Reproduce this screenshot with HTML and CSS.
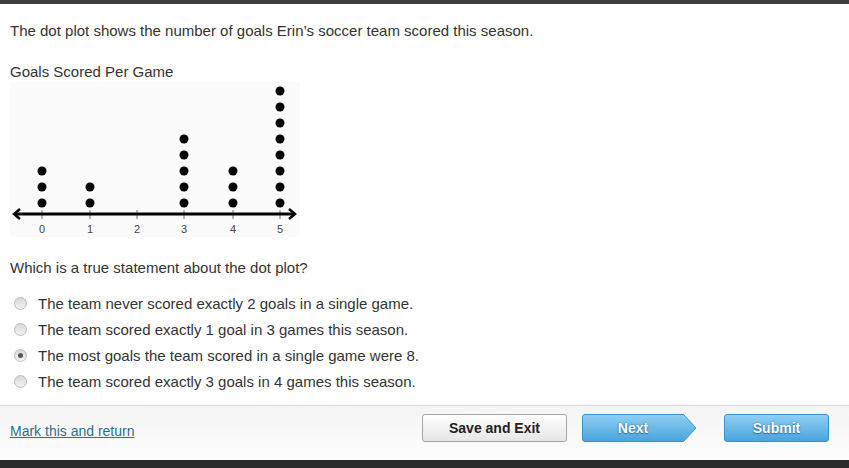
FILE: index.html
```html
<!DOCTYPE html>
<html>
<head>
<meta charset="utf-8">
<link rel="stylesheet" href="styles.css">
</head>
<body>
<div class="topbar"></div>
<main class="content">
  <p class="prompt">The dot plot shows the number of goals Erin’s soccer team scored this season.</p>
  <p class="title">Goals Scored Per Game</p>
  <svg class="plot" width="290" height="155" viewBox="0 0 290 155">
    <rect x="0" y="0" width="290" height="155" fill="#fbfbfb"/>
    <g fill="#000">
      <circle cx="32" cy="121" r="4.5"/><circle cx="32" cy="105" r="4.5"/><circle cx="32" cy="89" r="4.5"/>
      <circle cx="80" cy="121" r="4.5"/><circle cx="80" cy="105" r="4.5"/>
      <circle cx="174" cy="121" r="4.5"/><circle cx="174" cy="105" r="4.5"/><circle cx="174" cy="89" r="4.5"/><circle cx="174" cy="73" r="4.5"/><circle cx="174" cy="57" r="4.5"/>
      <circle cx="223" cy="121" r="4.5"/><circle cx="223" cy="105" r="4.5"/><circle cx="223" cy="89" r="4.5"/>
      <circle cx="270" cy="121" r="4.5"/><circle cx="270" cy="105" r="4.5"/><circle cx="270" cy="89" r="4.5"/><circle cx="270" cy="73" r="4.5"/><circle cx="270" cy="57" r="4.5"/><circle cx="270" cy="41" r="4.5"/><circle cx="270" cy="25" r="4.5"/><circle cx="270" cy="9" r="4.5"/>
    </g>
    <g stroke="#777" stroke-width="1">
      <line x1="32" y1="128" x2="32" y2="137"/>
      <line x1="80" y1="128" x2="80" y2="137"/>
      <line x1="127" y1="128" x2="127" y2="137"/>
      <line x1="174" y1="128" x2="174" y2="137"/>
      <line x1="223" y1="128" x2="223" y2="137"/>
      <line x1="270" y1="128" x2="270" y2="137"/>
    </g>
    <line x1="5" y1="132" x2="284" y2="132" stroke="#000" stroke-width="3"/>
    <polyline points="10,127 4,132 10,137" fill="none" stroke="#000" stroke-width="2.5"/>
    <polyline points="279,127 285,132 279,137" fill="none" stroke="#000" stroke-width="2.5"/>
    <g class="ticklabel" font-size="11" fill="#444" text-anchor="middle">
      <text x="32" y="151">0</text>
      <text x="80" y="151">1</text>
      <text x="127" y="151">2</text>
      <text x="174" y="151">3</text>
      <text x="223" y="151">4</text>
      <text x="270" y="151">5</text>
    </g>
  </svg>
  <p class="question">Which is a true statement about the dot plot?</p>
  <ul class="options">
    <li class="option"><span class="radio"></span>The team never scored exactly 2 goals in a single game.</li>
    <li class="option"><span class="radio"></span>The team scored exactly 1 goal in 3 games this season.</li>
    <li class="option"><span class="radio checked"></span>The most goals the team scored in a single game were 8.</li>
    <li class="option"><span class="radio"></span>The team scored exactly 3 goals in 4 games this season.</li>
  </ul>
</main>
<footer class="footer">
  <a class="mark" href="#">Mark this and return</a>
  <div class="buttons">
    <button class="btn btn-grey">Save and Exit</button>
    <button class="btn-next">
      <svg class="next-shape" width="115" height="28" viewBox="0 0 115 28">
        <defs>
          <linearGradient id="ng" x1="0" y1="0" x2="0" y2="1">
            <stop offset="0" stop-color="#8fd0f4"/>
            <stop offset="1" stop-color="#4aa3dd"/>
          </linearGradient>
        </defs>
        <path d="M0.5,3 Q0.5,0.5 3,0.5 L101.5,0.5 L114,14 L101.5,27.5 L3,27.5 Q0.5,27.5 0.5,25 Z" fill="url(#ng)" stroke="#3f8fc6"/>
      </svg>
      <span class="next-label">Next</span>
    </button>
    <button class="btn btn-blue">Submit</button>
  </div>
</footer>
<div class="bottombar"></div>
</body>
</html>
```
FILE: styles.css
```css
html, body {
  margin: 0;
  padding: 0;
  background: #fff;
  font-family: "Liberation Sans", Arial, sans-serif;
  color: #333;
}
.topbar {
  height: 4px;
  background: #3d3d3d;
}
.content {
  padding: 0 10px;
}
.prompt {
  margin: 17px 0 0;
  font-size: 15px;
  line-height: 20px;
}
.title {
  margin: 21px 0 0;
  font-size: 15px;
  line-height: 20px;
}
.plot {
  display: block;
}
.ticklabel {
  font-family: "Liberation Sans", Arial, sans-serif;
}
.question {
  margin: 21px 0 0;
  font-size: 15px;
  line-height: 20px;
}
.options {
  list-style: none;
  margin: 12px 0 0;
  padding: 0;
}
.option {
  display: flex;
  align-items: center;
  height: 26px;
  font-size: 15px;
  color: #333;
}
.radio {
  width: 11px;
  height: 11px;
  border-radius: 50%;
  border: 1px solid #bcbcbc;
  background: linear-gradient(#d8d8d8, #f2f2f2);
  margin: 0 11px 0 4px;
  box-sizing: content-box;
  position: relative;
  flex: none;
}
.radio.checked::after {
  content: "";
  position: absolute;
  left: 3px;
  top: 3px;
  width: 5px;
  height: 5px;
  border-radius: 50%;
  background: #555;
}
.footer {
  margin-top: 11px;
  border-top: 1px solid #d5d5d5;
  height: 55px;
  box-sizing: border-box;
  background: linear-gradient(#f5f5f5, #fdfdfd);
  display: flex;
  align-items: flex-start;
  justify-content: space-between;
  padding: 8px 20px 0 10px;
}
.mark {
  font-size: 14px;
  color: #2b6e8c;
  text-decoration: underline;
  margin-top: 9px;
}
.buttons {
  display: flex;
  align-items: center;
}
.btn {
  height: 28px;
  font-family: "Liberation Sans", Arial, sans-serif;
  font-size: 14px;
  font-weight: bold;
  border-radius: 3px;
  padding: 0;
  cursor: pointer;
}
.btn-grey {
  width: 145px;
  color: #222;
  border: 1px solid #a3a3a3;
  background: linear-gradient(#ffffff, #e6e6e6);
}
.btn-next {
  position: relative;
  width: 115px;
  height: 28px;
  margin-left: 15px;
  padding: 0;
  border: none;
  background: none;
  font-family: "Liberation Sans", Arial, sans-serif;
  font-size: 14px;
  font-weight: bold;
  color: #fff;
  cursor: pointer;
}
.next-shape {
  position: absolute;
  left: 0;
  top: 0;
}
.next-label {
  position: relative;
  display: block;
  width: 102px;
  text-shadow: 0 0 2px #2d6e99, 0 1px 1px #2d6e99;
}
.btn-blue {
  width: 105px;
  margin-left: 27px;
  color: #fff;
  border: 1px solid #3f8fc6;
  background: linear-gradient(#8fd0f4, #4aa3dd);
  text-shadow: 0 0 2px #2d6e99, 0 1px 1px #2d6e99;
}
.bottombar {
  height: 8px;
  background: #2b2b2b;
}
```
